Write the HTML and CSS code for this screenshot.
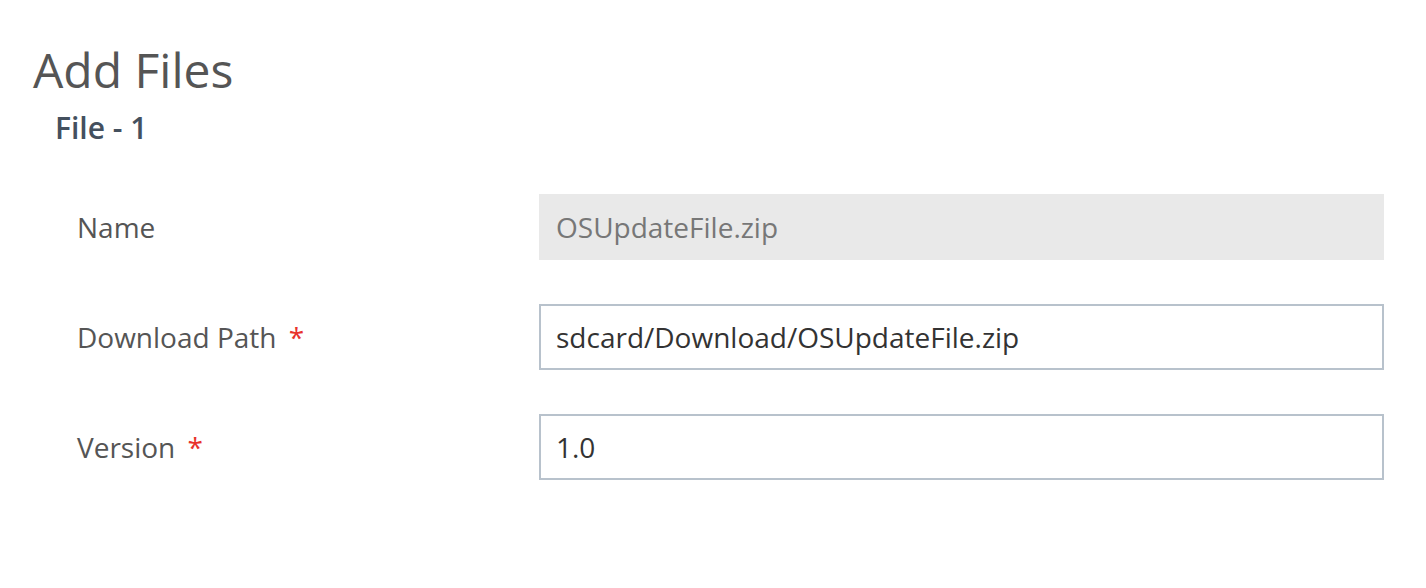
FILE: index.html
```html
<!DOCTYPE html>
<html lang="en">
<head>
    <meta charset="UTF-8">
    <title>Add Files</title>
    <link rel="stylesheet" href="styles.css">
</head>
<body>
    <div class="page">
        <h1>Add Files</h1>
        <h2 class="file-title">File - 1</h2>

        <div class="form">
            <div class="row">
                <label class="label" for="fileName">Name</label>
                <input class="field field-disabled" id="fileName" type="text" value="OSUpdateFile.zip" disabled>
            </div>
            <div class="row">
                <label class="label" for="downloadPath">Download Path <span class="required">*</span></label>
                <input class="field" id="downloadPath" type="text" value="sdcard/Download/OSUpdateFile.zip">
            </div>
            <div class="row">
                <label class="label" for="version">Version <span class="required">*</span></label>
                <input class="field" id="version" type="text" value="1.0">
            </div>
        </div>
    </div>
</body>
</html>
```

FILE: styles.css
```css
body {
    font-family: 'Open Sans', 'Liberation Sans', sans-serif;
    background-color: #ffffff;
    margin: 0;
    color: #555;
}

.page {
    padding: 38px 42px 0 33px;
}

h1 {
    font-size: 48px;
    font-weight: 400;
    line-height: 64px;
    margin: 0;
    color: #555;
}

.file-title {
    font-size: 30px;
    font-weight: 600;
    line-height: 40px;
    margin: 6px 0 0 22px;
    color: #44505e;
}

.form {
    display: flex;
    flex-direction: column;
    gap: 44px;
    margin-top: 46px;
    padding-left: 44px;
}

.row {
    display: flex;
    align-items: center;
}

.label {
    width: 462px;
    flex-shrink: 0;
    font-size: 28px;
    color: #555;
}

.required {
    color: #e8322b;
    margin-left: 5px;
}

.field {
    flex: 1;
    height: 66px;
    box-sizing: border-box;
    padding: 0 15px;
    border: 2px solid #b8c2cc;
    border-radius: 0;
    font-family: inherit;
    font-size: 28px;
    color: #333;
    background: #fff;
    outline: none;
}

.field-disabled {
    border-color: #e9e9e9;
    background: #e9e9e9;
    color: #777;
}
```
